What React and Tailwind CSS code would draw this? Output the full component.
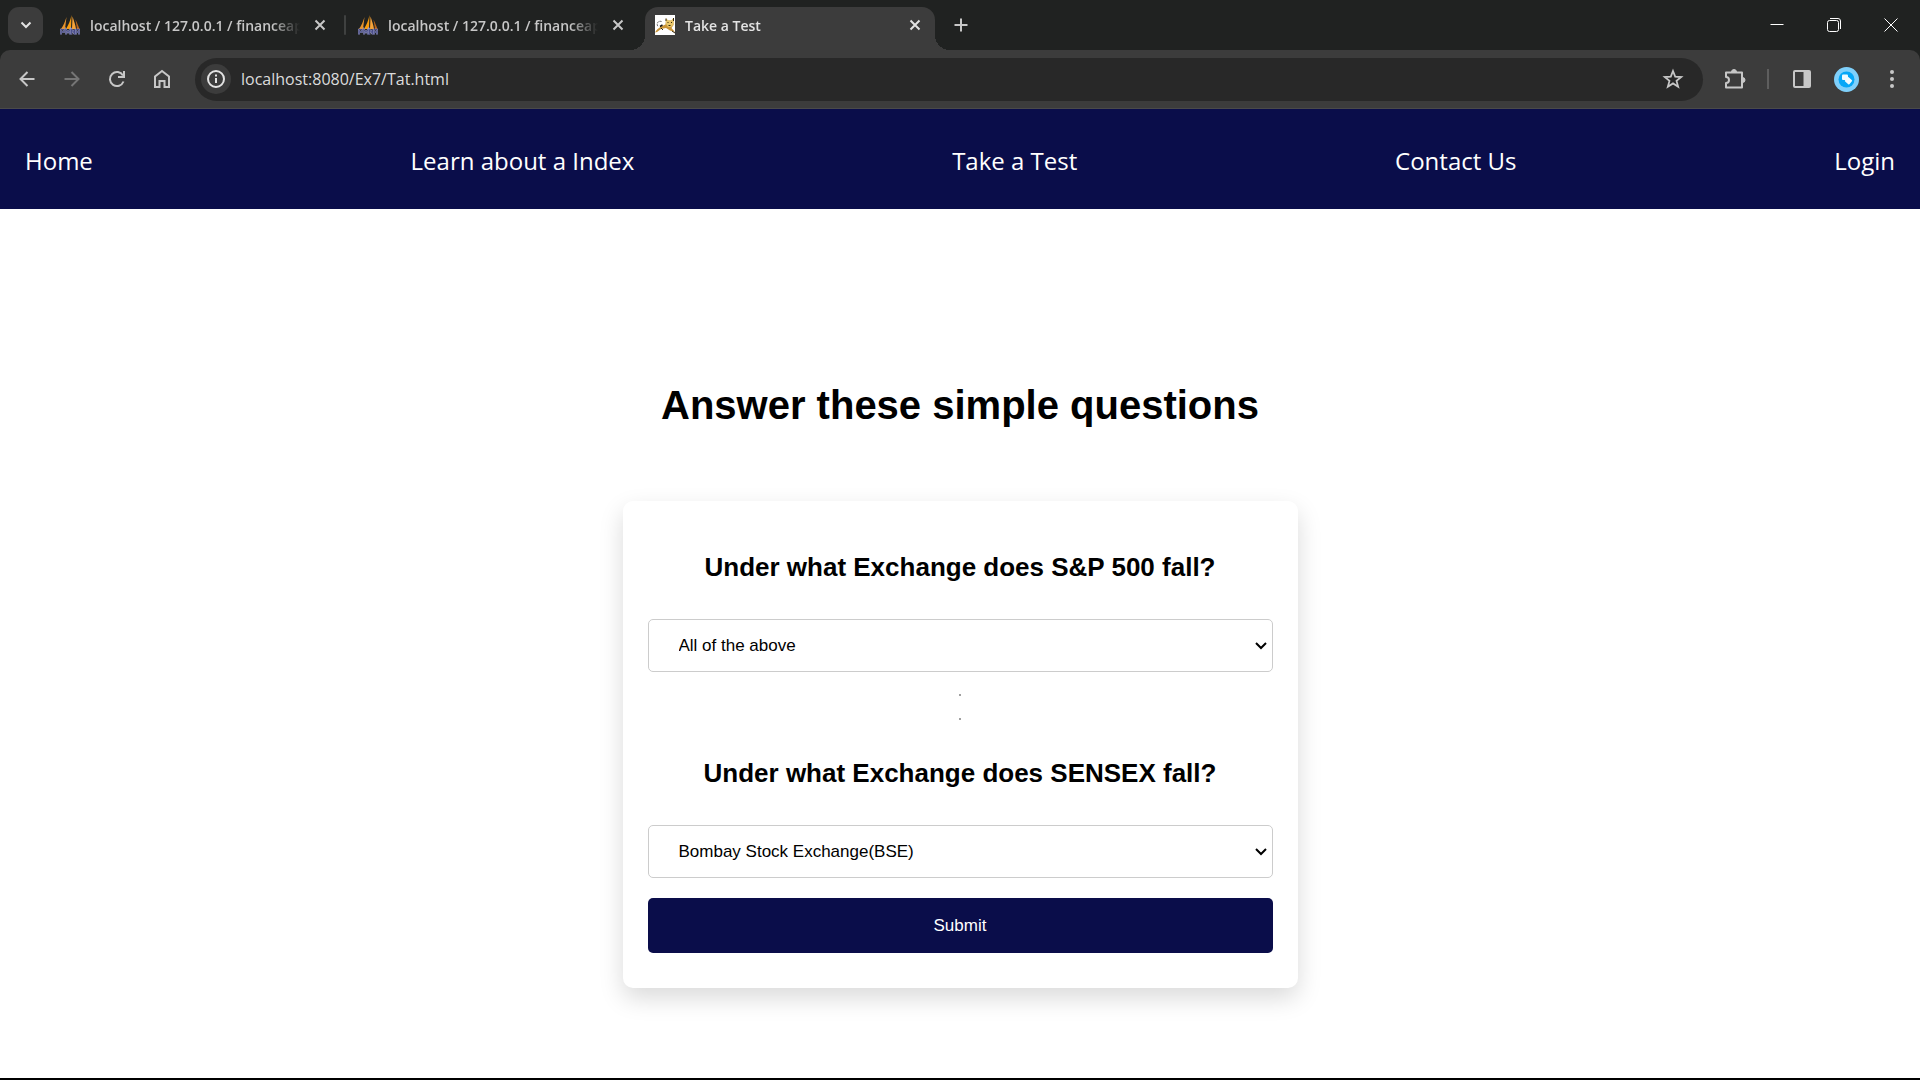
import React from "react";

const UI = "font-['Open_Sans','Noto_Sans',sans-serif]";

function SailsIcon() {
  return (
    <svg viewBox="0 0 20 20" className="size-5 shrink-0" aria-hidden="true">
      <path d="M6.500 2 5 14H1C3.500 10.500 5 6.500 6.500 2Z" fill="#e8942b" />
      <path d="M11.500 0 11 14H6C8.500 10 10.500 5 11.500 0Z" fill="#f89c0e" />
      <path d="M12.500 1.500C14 6 15.500 10 16 14h-4Z" fill="#f6a33a" />
      <path d="M15.500 4.500C17 8 18.500 11 19.500 14H17Z" fill="#b9641b" />
      <path
        d="M1 19.500v-5h3v2.500H1M6 19.500v-5l2 3 2-3v5M11.500 19.500v-5l2 3 1-3v5M16 19.500v-5h3v5M16 17h3"
        fill="none" stroke="#9a9cc9" strokeWidth="1.600"
      />
      <path
        d="M1 19.500v-5h3v2.500H1M6 19.500v-5l2 3 2-3v5M11.500 19.500v-5l2 3 1-3v5M16 19.500v-5h3v5M16 17h3"
        fill="none" stroke="#3b3f7c" strokeWidth=".8"
      />
    </svg>
  );
}

function CatIcon() {
  return (
    <svg viewBox="0 0 20 20" className="size-5 shrink-0" aria-hidden="true">
      <path d="M0 0h20v20H0z" fill="#fff" />
      <path d="M0 17.500C3 12.500 7 11 10.500 9.500L11 3.500l2 2h3.500l2-2.500v7l-2 3 3.500 4-5-1.500-4-2.500-5 1-4 3Z" fill="#c99438" />
      <path d="M11 9V3.500l2 2h3.500l2-2.500v7L16 12h-3Z" fill="#e9c76a" />
      <path d="M12.500 7.500h1M16 7.500h1M13.500 10.500h2M11 3.500V6M18.500 3v3M6 13l2 2M17 16l3 2" stroke="#35280f" />
      <path d="M6.500 6.500C3 5.500 1 8.500 3 11.500" fill="none" stroke="#555" strokeDasharray="2 1" />
      <path d="M5 11.500 7.500 10" stroke="#111" strokeWidth="1.500" />
    </svg>
  );
}

function Glyph({ d, className = "size-5", width = 2 }) {
  return (
    <svg viewBox="0 0 20 20" className={className} fill="none" stroke="currentColor" strokeWidth={width} aria-hidden="true">
      <path d={d} />
    </svg>
  );
}

const CROSS = "M5.500 5.500l9 9M14.500 5.500l-9 9";

function Tab({ title, icon, active }) {
  return (
    <div
      className={
        active
          ? "relative mx-[2px] mt-[7px] flex w-[290px] items-start gap-2.5 rounded-t-[13px] bg-[#3c3c3c] px-2.5 pt-2 text-[#e3e3e3]"
          : "mt-[7px] flex w-[298px] items-start gap-2.5 pl-[13px] pr-[15px] pt-2 text-[#c7c7c7]"
      }
    >
      {active && (
        <>
          <span className="absolute -left-[15px] bottom-0 size-[15px] bg-[radial-gradient(circle_at_0_0,transparent_15px,#3c3c3c_15px)]" />
          <span className="absolute -right-[15px] bottom-0 size-[15px] bg-[radial-gradient(circle_at_100%_0,transparent_15px,#3c3c3c_15px)]" />
        </>
      )}
      {icon}
      <span className="min-w-0 flex-1 overflow-hidden whitespace-nowrap text-[14px] font-semibold leading-[22px] [mask-image:linear-gradient(to_right,#000_calc(100%-28px),transparent)]">
        {title}
      </span>
      <button type="button" aria-label="Close tab" className="size-5 shrink-0">
        <Glyph d={CROSS} />
      </button>
    </div>
  );
}

function TabStrip() {
  return (
    <div className="flex h-[50px] bg-[#202221] pr-px">
      <button type="button" aria-label="Search tabs" className="ml-2 mr-1 mt-[7px] grid h-9 w-[35px] shrink-0 place-items-center rounded-[11px] bg-[#3c3c3c] text-[#e3e3e3]">
        <Glyph d="M5.500 7.500 10 12l4.500-4.500" />
      </button>
      <Tab title="localhost / 127.0.0.1 / financeapp" icon={<SailsIcon />} />
      <span className="-mx-px mt-[15px] h-5 w-[2px] rounded bg-[#3f4140]" />
      <Tab title="localhost / 127.0.0.1 / financeapp" icon={<SailsIcon />} />
      <Tab title="Take a Test" icon={<CatIcon />} active />
      <button type="button" aria-label="New tab" className="ml-3.5 mt-[15px] size-5 text-[#c7c7c7]">
        <Glyph d="M10 3.500v13M3.500 10h13" />
      </button>
      <div className="ml-auto flex text-white">
        <button type="button" aria-label="Minimize" className="grid w-[57px] place-items-center">
          <Glyph d="M3.500 9.500h13" width={1} />
        </button>
        <button type="button" aria-label="Restore" className="grid w-[57px] place-items-center">
          <Glyph d="M5.500 5.500h7a2 2 0 0 1 2 2v7a2 2 0 0 1-2 2h-7a2 2 0 0 1-2-2v-7a2 2 0 0 1 2-2ZM6 3.500h8a2.500 2.500 0 0 1 2.500 2.500v8" width={1} />
        </button>
        <button type="button" aria-label="Close" className="grid w-[57px] place-items-center">
          <Glyph d="M3.500 3.500l13 13M16.500 3.500l-13 13" width={1} />
        </button>
      </div>
    </div>
  );
}

function ToolButton({ label, className = "", children }) {
  return (
    <button type="button" aria-label={label} className={"grid h-9 w-[45px] shrink-0 place-items-center " + className}>
      {children}
    </button>
  );
}

function Toolbar() {
  return (
    <div className="bg-[#202221]">
      <div className="flex h-[59px] items-center rounded-t-[10px] border-b border-[#4a4a4a] bg-[#3c3c3c] pl-1 pr-1.5 text-[#c7c7c7]">
        <ToolButton label="Back"><Glyph d="M17.500 10H4M10.500 3 3.500 10l7 7" /></ToolButton>
        <ToolButton label="Forward" className="text-[#757575]"><Glyph d="M2.500 10H16M9.500 3l7 7-7 7" /></ToolButton>
        <ToolButton label="Reload">
          <Glyph d="M16.500 12.500A7 7 0 1 1 16 6.500M17 2v6h-6" />
        </ToolButton>
        <ToolButton label="Home"><Glyph d="M3 18V7.500L10 2l7 5.500V18h-4.500v-6h-5v6Z" /></ToolButton>
        <div className="ml-[11px] mr-[9px] flex h-[43px] min-w-0 flex-1 items-center rounded-full bg-[#282828] pl-1.5 pr-[19px]">
          <button type="button" aria-label="View site information" className="grid size-[30px] shrink-0 place-items-center rounded-full bg-[#3c3c3c] text-[#e3e3e3]">
            <svg viewBox="0 0 20 20" className="size-5" fill="none" stroke="currentColor" strokeWidth="2" aria-hidden="true">
              <circle cx="10" cy="10" r="8" />
              <path d="M10 9v5M10 5.500v2" />
            </svg>
          </button>
          <input
            aria-label="Address"
            type="text"
            defaultValue="localhost:8080/Ex7/Tat.html"
            className="ml-2.5 min-w-0 flex-1 bg-transparent text-[16px] leading-6 text-[#dcdcdc] outline-none"
          />
          <button type="button" aria-label="Bookmark this tab" className="size-[22px] shrink-0">
            <Glyph className="size-[22px]" d="M10 2.700l2 5.200 5.500.3-4.300 3.500 1.500 5.400L10 14l-4.700 3.100 1.500-5.400L2.500 8.200l5.500-.3Z" width={1.600} />
          </button>
        </div>
        <ToolButton label="Extensions">
          <svg viewBox="0 0 22 22" className="size-[22px]" fill="none" stroke="currentColor" strokeWidth="2" aria-hidden="true">
            <path d="M2 4.500h16v15H2v-4.500c4 0 4-6 0-6Z" strokeLinejoin="round" />
            <path d="M7.500 4a2.500 2.500 0 0 1 5 0ZM18.500 9.500a2.500 2.500 0 0 1 0 5Z" fill="currentColor" strokeWidth="1" />
          </svg>
        </ToolButton>
        <span className="mx-2.5 h-5 w-[2px] shrink-0 bg-[#5e5e5e]" />
        <ToolButton label="Side panel">
          <svg viewBox="0 0 20 20" className="size-5" aria-hidden="true">
            <rect x="2" y="2" width="16" height="16" rx="1" fill="none" stroke="currentColor" strokeWidth="2" />
            <path d="M11.500 2H18v16h-6.500Z" fill="currentColor" />
          </svg>
        </ToolButton>
        <ToolButton label="Profile">
          <svg viewBox="0 0 25 25" className="size-[25px]" aria-hidden="true">
            <circle cx="12.500" cy="12.500" r="12.500" fill="#7fd0fb" />
            <circle cx="12.500" cy="12.500" r="8" fill="#06a7f7" />
            <rect x="8" y="7.500" width="6" height="5.500" rx="1" fill="#f1fbff" />
            <rect x="11.500" y="11" width="6" height="5.500" rx="1" fill="#f1fbff" transform="rotate(40 14.500 13.700)" />
          </svg>
        </ToolButton>
        <ToolButton label="Menu">
          <svg viewBox="0 0 20 20" className="size-5" fill="currentColor" aria-hidden="true">
            <circle cx="10" cy="3" r="2" /><circle cx="10" cy="10" r="2" /><circle cx="10" cy="17" r="2" />
          </svg>
        </ToolButton>
      </div>
    </div>
  );
}

function Question({ id, title, options }) {
  return (
    <>
      <label htmlFor={id} className="text-center text-[26px] font-bold leading-[30px]">{title}</label>
      <div className="mt-[37px] grid w-full items-center">
        <select id={id} className="col-start-1 row-start-1 h-[53px] w-full appearance-none rounded-[5px] border border-[#ccc] bg-white pl-[30px] pr-8 text-[17px] text-black">
          {options.map((o) => <option key={o}>{o}</option>)}
        </select>
        <svg viewBox="0 0 12 8" className="pointer-events-none col-start-1 row-start-1 mr-1.5 h-2 w-3 justify-self-end" fill="none" stroke="#000" strokeWidth="2" aria-hidden="true">
          <path d="M1 1l5 5 5-5" />
        </svg>
      </div>
    </>
  );
}

export default function App() {
  return (
    <div className={"flex min-h-screen flex-col border-b-2 border-black bg-white " + UI}>
      <header>
        <TabStrip />
        <Toolbar />
      </header>
      <nav className="flex h-[100px] items-center justify-between bg-[#0a0d4a] px-[25px] pt-1 text-[24px] leading-8 text-white">
        <a href="#home">Home</a>
        <a href="#learn">Learn about a Index</a>
        <a href="#test">Take a Test</a>
        <a href="#contact">Contact Us</a>
        <a href="#login">Login</a>
      </nav>
      <main className="flex flex-1 flex-col items-center pt-[173px] font-['Liberation_Sans',Arial,sans-serif] text-black">
        <h1 className="text-[40px] font-bold leading-[46px]">Answer these simple questions</h1>
        <form
          onSubmit={(e) => e.preventDefault()}
          className="mt-[73px] flex w-full max-w-[675px] flex-col items-center rounded-[10px] bg-white px-[25px] pb-[35px] pt-[51px] shadow-[0_10px_25px_rgba(0,0,0,0.15)]"
        >
          <Question
            id="sp500"
            title="Under what Exchange does S&P 500 fall?"
            options={["All of the above"]}
          />
          <hr className="mt-[22px] h-[2px] w-[2px] border border-[#a0a0a0]" />
          <hr className="mb-[38px] mt-[22px] h-[2px] w-[2px] border border-[#a0a0a0]" />
          <Question
            id="sensex"
            title="Under what Exchange does SENSEX fall?"
            options={["Bombay Stock Exchange(BSE)"]}
          />
          <button type="submit" className="mt-5 h-[55px] w-full rounded-[5px] bg-[#0a0d4a] text-[17px] text-white">
            Submit
          </button>
        </form>
      </main>
    </div>
  );
}
